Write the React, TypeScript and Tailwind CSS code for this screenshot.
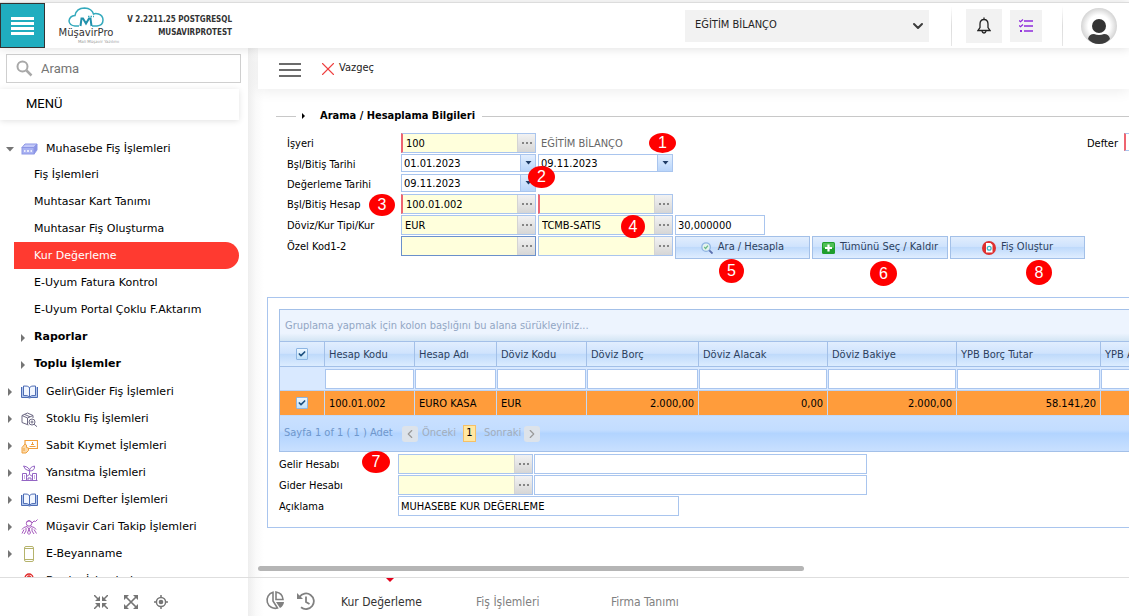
import type { ReactNode } from "react";
import { Check, ChevronDown, ChevronLeft, ChevronRight, X } from "lucide-react";

type FieldProps = {
  id: string;
  label?: string;
  value?: string;
  kind?: "lookup" | "date" | "text";
  required?: boolean;
  focused?: boolean;
  className?: string;
};

const Dots = () => (
  <svg width="10" height="2" viewBox="0 0 10 2" fill="#858585">
    <rect x="0" width="2" height="2" />
    <rect x="4" width="2" height="2" />
    <rect x="8" width="2" height="2" />
  </svg>
);

function Field({ id, label, value = "", kind = "lookup", required, focused, className = "w-[135px]" }: FieldProps) {
  const border = focused ? "border-[#6a90cb]" : "border-[#a9c5ee]";
  const bg = kind === "lookup" ? "bg-[#ffffdc]" : "bg-white";
  const height = kind === "date" ? "h-[18px]" : "h-[20px]";
  const edge = required ? "border-l-2 border-l-[#ee6470]" : "";
  return (
    <div className={`flex shrink-0 border ${border} ${bg} ${height} ${edge} ${className}`}>
      <input
        id={id}
        aria-label={label}
        defaultValue={value}
        className={`min-w-0 flex-1 bg-transparent pt-[2px] text-black outline-none ${kind === "lookup" ? "pl-[3px]" : "pl-[2px]"}`}
      />
      {kind === "lookup" && (
        <button
          aria-label="Seç"
          className="flex w-[18px] items-center justify-center border-l border-[#d4d4d4] bg-gradient-to-b from-[#f2f2f2] to-[#d6d6d6]"
        >
          <Dots />
        </button>
      )}
      {kind === "date" && (
        <button
          aria-label="Takvim"
          className="flex w-[15px] items-center justify-center border-l border-[#a9c5ee] bg-gradient-to-b from-[#e2eefe] to-[#b9d5fa]"
        >
          <svg width="7" height="4" viewBox="0 0 7 4">
            <path d="M.5 0h6L3.500 3.500z" fill="#1f3c66" />
          </svg>
        </button>
      )}
    </div>
  );
}

function FormRow({ label, id, short, children }: { label: string; id: string; short?: boolean; children: ReactNode }) {
  return (
    <div className={`flex items-start ${short ? "h-[20px]" : "h-[21px]"}`}>
      <label htmlFor={id} className="w-[114px] shrink-0 leading-[21px]">
        {label}
      </label>
      <div className="flex gap-[2px]">{children}</div>
    </div>
  );
}

function ActionButton({ icon, children, className }: { icon: ReactNode; children: ReactNode; className: string }) {
  return (
    <button
      className={`flex h-[23px] items-center justify-center gap-[5px] border border-[#a3c0e8] bg-[linear-gradient(#e1edfd,#cfe3fd_45%,#bfdafb_50%,#dfedff)] text-[#2c3f5e] ${className}`}
    >
      {icon}
      {children}
    </button>
  );
}

/* ---- sidebar icons ---- */

const CashIcon = () => (
  <svg width="17" height="14" viewBox="0 0 17 14" fill="#a9b2f2" stroke="#8d97e6">
    <path d="M1 5.500L4 2h12l-3 3.500z" fill="#c3c9f8" />
    <path d="M13 5.500L16 2v6l-3 4z" fill="#8a94e4" />
    <rect x="1" y="5.500" width="12" height="6.500" />
    <path d="M3 9h1.500M6 9h2M9.500 9H11" stroke="#fff" strokeWidth="1.500" />
  </svg>
);

const BookIcon = () => (
  <svg width="17" height="14" viewBox="0 0 17 14" fill="none" stroke="#4d6cb5">
    <path d="M.5 2v10.500h6.500q1.500 1 3 0h6.500V2" fill="#b4c9ee" />
    <path d="M2.500 1q4.500-.500 6 1.500 1.500-2 6-1.500v9.500q-4.500-.500-6 1.500-1.500-2-6-1.500z" fill="#f1f6ff" />
    <path d="M8.500 2.500v9.500" />
  </svg>
);

const StockIcon = () => (
  <svg width="17" height="15" viewBox="0 0 17 15" fill="none" stroke="#6f6b85">
    <path d="M7.500 13L1 10.500v-7L6.500 1 12 3.500V6M1 3.500L6.500 6 12 3.500M6.500 6v6.500M3.500 2.400L9 4.800" />
    <circle cx="11" cy="10" r="3" />
    <circle cx="11" cy="10" r="1" />
    <path d="M13 12.200l3 2.500" />
  </svg>
);

const AssetIcon = () => (
  <svg width="17" height="15" viewBox="0 0 17 15" fill="none" stroke="#f0a03c">
    <path d="M4 5V1.500h12.500v8H8" strokeWidth="1.200" />
    <path d="M8.500 7.500h6M10 5.500h3M11.500 3v2" />
    <path d="M1 14V8.500L4 5l1.500 1v2.500L7.500 9v2.500L5 14zM3 9v3" fill="#fbd9a8" />
  </svg>
);

const ReflectIcon = () => (
  <svg width="17" height="16" viewBox="0 0 17 16" fill="none" stroke="#9465c4">
    <path d="M2.500 1q1 4 6 5 0-4-6-5zM8.500 6q0-4 5-5 .500 5-5 5zM8.500 6v3.500" />
    <path d="M1.500 15.500v-7h4v7M11.500 15.500v-7h4v7M5.500 11.500l3-2 3 2M7 15.500v-2.500h3v2.500M.5 15.500h16M3 11h1M13 11h1M3 13h1M13 13h1" />
  </svg>
);

const AdvisorIcon = () => (
  <svg width="17" height="16" viewBox="0 0 17 16" fill="none" stroke="#a457bd">
    <circle cx="8" cy="4.500" r="2.700" />
    <path d="M5.500 3q2.500-3 5 0M11 4l2-2 1.500.5 2-2M1 10.500Q2 8 6 7.500l2 2.500 2-2.500q4 .5 5 3M8 10l-1.500 4L8 15.500 9.500 14z" />
    <path d="M3 10.500l-2 4M13 10.500l2.500 4M5 9v3l-2 3M11 9v3l2 3" />
  </svg>
);

const DocIcon = () => (
  <svg width="17" height="16" viewBox="0 0 17 16" fill="none" stroke="#b5b36c">
    <rect x="3.500" y=".5" width="9" height="15" rx="1.500" />
    <path d="M3.500 2.500h9M3.500 13.500h9" />
  </svg>
);

const PayrollIcon = () => (
  <svg width="17" height="16" viewBox="0 0 17 16" fill="none" stroke="#e02b2b" strokeWidth="1.300">
    <circle cx="8" cy="5" r="4" />
    <path d="M6.500 4q1.500-2 3 0L8 6M2 15q1-5 6-5t6 5" />
  </svg>
);

const Arrow = ({ open }: { open?: boolean }) => (
  <svg width="8" height="8" viewBox="0 0 8 8" fill="#757575" className="shrink-0">
    {open ? <path d="M0 2h8L4 6.500z" /> : <path d="M2 0v8l4-4z" />}
  </svg>
);

const subItems = [
  "Fiş İşlemleri",
  "Muhtasar Kart Tanımı",
  "Muhtasar Fiş Oluşturma",
  "Kur Değerleme",
  "E-Uyum Fatura Kontrol",
  "E-Uyum Portal Çoklu F.Aktarım",
];

const groups = [
  { label: "Gelir\\Gider Fiş İşlemleri", icon: <BookIcon /> },
  { label: "Stoklu Fiş İşlemleri", icon: <StockIcon /> },
  { label: "Sabit Kıymet İşlemleri", icon: <AssetIcon /> },
  { label: "Yansıtma İşlemleri", icon: <ReflectIcon /> },
  { label: "Resmi Defter İşlemleri", icon: <BookIcon /> },
  { label: "Müşavir Cari Takip İşlemleri", icon: <AdvisorIcon /> },
  { label: "E-Beyanname", icon: <DocIcon /> },
  { label: "Bordro İşlemleri", icon: <PayrollIcon /> },
];

function GroupRow({ label, icon, open }: { label: string; icon: ReactNode; open?: boolean }) {
  return (
    <a href="#" className="flex h-[27px] items-center pt-[3px] pl-[6px]">
      <Arrow open={open} />
      <span className="ml-[7px] w-[25px]">{icon}</span>
      {label}
    </a>
  );
}

function Sidebar() {
  return (
    <aside className="flex w-[248px] shrink-0 flex-col bg-white">
      <div className="mt-[6px] mr-[7px] ml-[6px] flex h-[29px] shrink-0 items-center border border-[#cfcfcf]">
        <svg width="17" height="17" viewBox="0 0 17 17" fill="none" stroke="#a8a8a8" className="ml-[9px] shrink-0">
          <circle cx="6.500" cy="6.500" r="5" strokeWidth="2" />
          <path d="M10.500 10.500l5 5" strokeWidth="2.500" />
        </svg>
        <input
          aria-label="Arama"
          placeholder="Arama"
          className="ml-[8px] min-w-0 flex-1 font-['Roboto',sans-serif] text-[13px] outline-none placeholder:text-[#757575]"
        />
      </div>
      <h2 className="mt-[6px] mr-[9px] flex h-[31px] shrink-0 items-center pb-[2px] pl-[26px] font-['Roboto',sans-serif] text-[13px] text-black shadow-[0_1px_6px_rgba(0,0,0,0.12)]">
        MENÜ
      </h2>
      <nav className="mt-[14px] min-h-0 flex-1 overflow-hidden font-['DejaVu_Sans',sans-serif] text-[11px] text-black">
        <GroupRow label="Muhasebe Fiş İşlemleri" icon={<CashIcon />} open />
        {subItems.map((item) => (
          <a
            key={item}
            href="#"
            className={`mr-[9px] ml-[14px] flex h-[27px] items-center pt-[2px] pl-[20px] ${
              item === "Kur Değerleme" ? "rounded-r-full bg-[#ff3a30] text-white" : ""
            }`}
          >
            {item}
          </a>
        ))}
        {["Raporlar", "Toplu İşlemler"].map((item) => (
          <a key={item} href="#" className="flex h-[27px] items-center gap-[7px] pt-[2px] pl-[19px] font-bold">
            <Arrow />
            {item}
          </a>
        ))}
        {groups.map((g) => (
          <GroupRow key={g.label} label={g.label} icon={g.icon} />
        ))}
      </nav>
      <div className="flex h-[39px] shrink-0 items-center justify-center gap-4 border-t border-[#dedede] pt-[9px] pl-[13px] text-[#757575]">
        <button aria-label="Daralt">
          <svg width="14" height="14" viewBox="0 0 14 14" fill="currentColor" stroke="currentColor" strokeWidth="1.500">
            <path d="M0 0l4 4M14 0l-4 4M0 14l4-4M14 14l-4-4" />
            <path d="M6 1v5H1zM8 1v5h5zM6 13V8H1zM8 13V8h5z" stroke="none" />
          </svg>
        </button>
        <button aria-label="Genişlet">
          <svg width="14" height="14" viewBox="0 0 14 14" fill="currentColor" stroke="currentColor" strokeWidth="1.700">
            <path d="M2 2l10 10M12 2L2 12" />
            <path d="M0 0h5L0 5zM14 0H9l5 5zM0 14h5L0 9zM14 14H9l5-5z" stroke="none" />
          </svg>
        </button>
        <button aria-label="Konum">
          <svg width="14" height="14" viewBox="0 0 14 14" fill="none" stroke="currentColor" strokeWidth="1.500">
            <circle cx="7" cy="7" r="4.600" />
            <circle cx="7" cy="7" r="2.300" fill="currentColor" stroke="none" />
            <path d="M7 0v3M7 11v3M0 7h3M11 7h3" />
          </svg>
        </button>
      </div>
    </aside>
  );
}

function Header() {
  return (
    <header className="relative z-10 mt-[2px] flex h-[46px] shrink-0 items-center border-t border-[#dcdcdc] bg-white shadow-[0_0_10px_rgba(0,0,0,0.14)]">
      <button
        aria-label="Menü"
        className="flex h-[45px] w-[45px] flex-col items-center justify-center gap-[2px] border border-[#333] bg-[#20adbf]"
      >
        <span className="h-[3px] w-[23px] bg-white" />
        <span className="h-[3px] w-[23px] bg-white" />
        <span className="h-[3px] w-[23px] bg-white" />
        <span className="h-[3px] w-[23px] bg-white" />
      </button>
      <div className="ml-[8px] flex w-[66px] flex-col items-center">
        <svg width="36" height="20" viewBox="0 0 36 20" fill="none" stroke="#35aabd" strokeWidth="1.500">
          <path d="M11 19H7Q1.500 18.500 1 14 1.500 9 7 8.500 8.500 1 16.500 1 24 1.500 25.500 7q2-1 5 0 4.500 1.500 4.500 6 0 5.500-6 6H24" />
          <path d="M12.500 19l1-7.500h1.500l3 5 3-5h1.500l1 7.500" strokeWidth="2" stroke="#2191ac" />
          <path d="M20 9.500h6" strokeDasharray="1.500 1" />
        </svg>
        <span className="font-['DejaVu_Sans',sans-serif] text-[10px] leading-[12px] text-[#333]">MüşavirPro</span>
        <span className="self-end font-['DejaVu_Sans',sans-serif] text-[4px] leading-[5px] text-[#999]">Mali Müşavir Yazılımı</span>
      </div>
      <div className="ml-[5px] w-[108px] text-right text-[8px] leading-[13px] font-bold whitespace-nowrap text-[#333]">
        V 2.2211.25 POSTGRESQL
        <br />
        MUSAVIRPROTEST
      </div>
      <div className="ml-auto flex items-center pr-[12px]">
        <div className="relative">
          <select
            aria-label="İşyeri seçimi"
            className="h-[32px] w-[244px] appearance-none bg-[#f2f2f2] pl-[10px] text-[11px] text-[#222] outline-none"
          >
            <option>EĞİTİM BİLANÇO</option>
          </select>
          <ChevronDown className="pointer-events-none absolute top-[8px] right-[3px] h-[16px] w-[16px] text-[#3c3c3c]" strokeWidth={3} />
        </div>
        <span className="ml-[22px] h-[40px] w-px bg-gradient-to-b from-white via-[#ddd] to-[#e6e6e6]" />
        <button aria-label="Bildirimler" className="ml-[14px] flex h-[34px] w-[36px] items-center justify-center bg-[#f2f2f2]">
          <svg width="14" height="17" viewBox="0 0 14 17" fill="none" stroke="#222" strokeWidth="1.300">
            <path d="M7 2.500Q3 2.500 3 7v3.500L1 13.500h12L11 10.500V7Q11 2.500 7 2.500zM7 .5v2" />
            <path d="M5 14q.300 2 2 2t2-2" />
          </svg>
        </button>
        <button aria-label="Görevler" className="ml-[8px] flex h-[32px] w-[32px] items-center justify-center bg-[#f2f2f2]">
          <svg width="14" height="13" viewBox="0 0 14 13" fill="none" stroke="#8f2bdb" strokeWidth="1.600">
            <path d="M5 2h9M5 7h9M5 12h9" />
            <path d="M0 1.500l1.500 1.300L4 .5M0 6.500l1.500 1.300L4 5.500" strokeWidth="1.200" />
            <path d="M1 12h2" strokeWidth="2" />
          </svg>
        </button>
        <span className="ml-[20px] h-[40px] w-px bg-gradient-to-b from-white via-[#ddd] to-[#e6e6e6]" />
        <button aria-label="Profil" className="ml-[18px]">
          <svg width="36" height="36" viewBox="0 0 36 36">
            <defs>
              <radialGradient id="avatar">
                <stop offset="0.600" stopColor="#fff" />
                <stop offset="1" stopColor="#d4d4d4" />
              </radialGradient>
            </defs>
            <circle cx="18" cy="18" r="18" fill="url(#avatar)" />
            <circle cx="18" cy="18" r="7" fill="#333" />
            <path d="M7 31q1-5 6-5 5 2 10 0 5 0 6 5-4 5-11 5T7 31z" fill="#3c3c3c" />
          </svg>
        </button>
      </div>
    </header>
  );
}

function CheckBox({ label }: { label: string }) {
  return (
    <span className="relative mx-auto flex h-[12px] w-[12px] items-center justify-center">
      <input
        type="checkbox"
        defaultChecked
        aria-label={label}
        className="peer h-[12px] w-[12px] appearance-none rounded-[1px] border border-[#8db5e2] bg-gradient-to-b from-[#eef7ff] to-[#bfe0fa]"
      />
      <Check className="pointer-events-none invisible absolute h-[8px] w-[8px] text-[#1d5080] peer-checked:visible" strokeWidth={5} />
    </span>
  );
}

const columns = [
  { title: "Hesap Kodu", value: "100.01.002", width: "w-[90px]" },
  { title: "Hesap Adı", value: "EURO KASA", width: "w-[82px]" },
  { title: "Döviz Kodu", value: "EUR", width: "w-[90px]" },
  { title: "Döviz Borç", value: "2.000,00", width: "w-[112px]", numeric: true },
  { title: "Döviz Alacak", value: "0,00", width: "w-[129px]", numeric: true },
  { title: "Döviz Bakiye", value: "2.000,00", width: "w-[129px]", numeric: true },
  { title: "YPB Borç Tutar", value: "58.141,20", width: "w-[144px]", numeric: true },
  { title: "YPB Alacak", value: "", width: "w-[144px]", numeric: true },
];

function Grid() {
  return (
    <div className="w-[966px] border border-[#a3c0e8] text-[#2c3f5e]">
      <div className="flex h-[32px] items-center border-b border-[#a3c0e8] bg-[linear-gradient(#edf4fe_75%,#d3e5f4)] pt-[2px] pl-[5px] text-[#92a6c4]">
        Gruplama yapmak için kolon başlığını bu alana sürükleyiniz...
      </div>
      <table className="w-full table-fixed border-separate border-spacing-0">
        <thead>
          <tr className="h-[25px] bg-[linear-gradient(#e1eefe,#cfe3fd_45%,#bfdafb_50%,#dfeeff)]">
            <th className="w-[45px] border-r border-b border-[#a3c0e8] p-0">
              <CheckBox label="Tümünü seç" />
            </th>
            {columns.map((c) => (
              <th key={c.title} className={`border-r border-b border-[#a3c0e8] p-0 pt-[2px] pl-1 text-left font-normal whitespace-nowrap ${c.width}`}>
                {c.title}
              </th>
            ))}
          </tr>
        </thead>
        <tbody>
          <tr className="h-[24px] bg-[#d9e9ff]">
            <td className="border-b border-[#b9d2f5] p-0" />
            {columns.map((c) => (
              <td key={c.title} className="border-b border-[#b9d2f5] p-0 pr-px">
                <input aria-label={`${c.title} filtre`} className="block h-[20px] w-full border border-[#a9c5ee] bg-white px-1 outline-none" />
              </td>
            ))}
          </tr>
          <tr className="h-[25px] bg-[#ff9c3b] text-black">
            <td className="border-r border-b border-[#c3d9f7] p-0">
              <CheckBox label="Satırı seç" />
            </td>
            {columns.map((c) => (
              <td key={c.title} className={`border-r border-b border-[#c3d9f7] p-0 px-1 pt-[2px] ${c.numeric ? "text-right" : ""}`}>
                {c.value}
              </td>
            ))}
          </tr>
        </tbody>
      </table>
      <div className="flex h-[35px] items-center bg-[linear-gradient(#c9e0ff,#c3ddff_40%,#b2d4ff_50%,#c9e0ff)] pl-1 text-[#6f97cc]">
        <span className="w-[118px]">Sayfa 1 of 1 ( 1 ) Adet</span>
        <button aria-label="Önceki sayfa" className="flex h-[16px] w-[16px] items-center justify-center rounded-[3px] bg-[#dde3ea] text-[#9a9a9a]">
          <ChevronLeft className="h-[14px] w-[14px]" />
        </button>
        <span className="ml-[4px] w-[41px] text-[#a2adbb]">Önceki</span>
        <span className="flex h-[17px] w-[13px] items-center justify-center border border-[#f5c067] bg-[#ffe7a2] text-black">1</span>
        <span className="ml-[8px] w-[40px] text-[#a2adbb]">Sonraki</span>
        <button aria-label="Sonraki sayfa" className="flex h-[16px] w-[16px] items-center justify-center rounded-[3px] bg-[#dde3ea] text-[#9a9a9a]">
          <ChevronRight className="h-[14px] w-[14px]" />
        </button>
      </div>
    </div>
  );
}

/* numbered step markers, placed over the form */
const markers = [
  { n: 1, place: "left-[401px] top-[85px] h-[20px] w-[27px]" },
  { n: 2, place: "left-[280px] top-[118px] h-[22px] w-[27px]" },
  { n: 3, place: "left-[121px] top-[146px] h-[22px] w-[26px]" },
  { n: 4, place: "left-[373px] top-[167px] h-[23px] w-[24px]" },
  { n: 5, place: "left-[471px] top-[211px] h-[24px] w-[25px]" },
  { n: 6, place: "left-[622px] top-[213px] h-[25px] w-[27px]" },
  { n: 7, place: "left-[114px] top-[403px] h-[22px] w-[28px]" },
  { n: 8, place: "left-[778px] top-[212px] h-[25px] w-[26px]" },
];

const tabs = ["Kur Değerleme", "Fiş İşlemleri", "Firma Tanımı"];

export default function App() {
  return (
    <div className="flex h-screen flex-col overflow-hidden bg-white font-['DejaVu_Sans_Condensed','Noto_Sans',sans-serif] text-[11px] text-black">
      <Header />
      <div className="flex min-h-0 flex-1">
        <Sidebar />
        <main className="relative flex min-w-0 flex-1 flex-col overflow-hidden bg-[linear-gradient(to_right,#eeeeee,#fafafa_8px,#ffffff_16px)]">
          <div className="ml-[10px] flex h-[41px] shrink-0 items-center bg-white pl-[21px] shadow-[0_2px_14px_rgba(0,0,0,0.08)]">
            <button aria-label="Araç çubuğu" className="flex w-[22px] flex-col gap-[4px] pt-[2px]">
              <span className="h-[2px] bg-[#6b6b6b]" />
              <span className="h-[2px] bg-[#6b6b6b]" />
              <span className="h-[2px] bg-[#6b6b6b]" />
            </button>
            <button className="ml-[16px] flex items-center text-[#222]">
              <X className="h-[22px] w-[22px]" color="#ee4040" strokeWidth={1.2} />
              Vazgeç
            </button>
          </div>

          <div className="min-h-0 flex-1 overflow-hidden pl-[19px]">
            <div className="mt-[19px] ml-[9px] flex h-[16px] items-center">
              <span className="h-px w-[20px] bg-[#c8c8c8]" />
              <svg width="5" height="8" viewBox="0 0 5 8" className="mx-[5px]">
                <path d="M1 1v6l3-3z" />
              </svg>
              <h1 className="ml-[9px] text-[11px] font-bold">Arama / Hesaplama Bilgileri</h1>
              <span className="ml-[7px] h-px flex-1 bg-[#c8c8c8]" />
            </div>

            <div className="mt-[9px] ml-[20px] flex justify-between">
              <div>
                <FormRow label="İşyeri" id="isyeri">
                  <Field id="isyeri" value="100" required />
                  <span className="pl-[3px] leading-[21px] text-[#666]">EĞİTİM BİLANÇO</span>
                </FormRow>
                <FormRow label="Bşl/Bitiş Tarihi" id="bsl-tarih" short>
                  <Field id="bsl-tarih" value="01.01.2023" kind="date" />
                  <Field id="bitis-tarih" label="Bitiş Tarihi" value="09.11.2023" kind="date" />
                </FormRow>
                <FormRow label="Değerleme Tarihi" id="deger-tarih" short>
                  <Field id="deger-tarih" value="09.11.2023" kind="date" />
                </FormRow>
                <FormRow label="Bşl/Bitiş Hesap" id="bsl-hesap">
                  <Field id="bsl-hesap" value="100.01.002" required />
                  <Field id="bitis-hesap" label="Bitiş Hesap" required />
                </FormRow>
                <FormRow label="Döviz/Kur Tipi/Kur" id="doviz">
                  <Field id="doviz" value="EUR" />
                  <Field id="kur-tipi" label="Kur Tipi" value="TCMB-SATIS" />
                  <Field id="kur" label="Kur" value="30,000000" kind="text" className="w-[90px]" />
                </FormRow>
                <FormRow label="Özel Kod1-2" id="ozel-kod-1">
                  <Field id="ozel-kod-1" focused />
                  <Field id="ozel-kod-2" label="Özel Kod 2" />
                  <ActionButton
                    className="w-[135px]"
                    icon={
                      <svg width="12" height="12" viewBox="0 0 13 13" fill="#e4f3ee" stroke="#8fb4e2" strokeWidth="1.400">
                        <circle cx="5.500" cy="5.500" r="4.600" />
                        <path d="M9 9l3.500 3.500" stroke="#5a6fae" strokeWidth="2" />
                        <path d="M3.500 5.500L5 7l2.500-3" stroke="#6cb98a" fill="none" />
                      </svg>
                    }
                  >
                    Ara / Hesapla
                  </ActionButton>
                  <ActionButton
                    className="w-[136px]"
                    icon={
                      <svg width="13" height="12" viewBox="0 0 13 12">
                        <rect width="13" height="12" rx="1.500" fill="#1f9e2c" />
                        <rect x="1" y="1" width="11" height="5" rx="1" fill="#4fc055" />
                        <path d="M6.500 2.500v7M3 6h7" stroke="#fff" strokeWidth="2.200" />
                      </svg>
                    }
                  >
                    Tümünü Seç / Kaldır
                  </ActionButton>
                  <ActionButton
                    className="w-[135px]"
                    icon={
                      <svg width="14" height="14" viewBox="0 0 14 14">
                        <circle cx="7" cy="7" r="7" fill="#dd3030" />
                        <path d="M4 2h4.500L10.500 4v7.500H4z" fill="#fff" />
                        <circle cx="7.200" cy="7.200" r="1.900" fill="none" stroke="#38b6c9" strokeWidth="1.300" />
                      </svg>
                    }
                  >
                    Fiş Oluştur
                  </ActionButton>
                </FormRow>
              </div>
              <div className="flex shrink-0 items-start">
                <label htmlFor="defter" className="leading-[21px]">Defter</label>
                <div className="ml-[6px] h-[18px] w-[5px] overflow-hidden">
                  <input id="defter" className="h-[18px] w-[100px] border border-l-2 border-[#a9c5ee] border-l-[#ee6470]" />
                </div>
              </div>
            </div>

            <section className="mt-[40px] w-[1000px] border border-[#a9c5ee] px-[11px] py-[11px]">
              <Grid />
              <div className="mt-[2px]">
                <div className="flex h-[21px] items-start">
                  <label htmlFor="gelir" className="w-[119px] leading-[21px]">Gelir Hesabı</label>
                  <Field id="gelir" />
                  <Field id="gelir-ad" label="Gelir hesap adı" kind="text" className="ml-px w-[333px]" />
                </div>
                <div className="flex h-[21px] items-start">
                  <label htmlFor="gider" className="w-[119px] leading-[21px]">Gider Hesabı</label>
                  <Field id="gider" />
                  <Field id="gider-ad" label="Gider hesap adı" kind="text" className="ml-px w-[333px]" />
                </div>
                <div className="flex h-[20px] items-start">
                  <label htmlFor="aciklama" className="w-[119px] leading-[21px]">Açıklama</label>
                  <Field id="aciklama" value="MUHASEBE KUR DEĞERLEME" kind="text" className="w-[281px]" />
                </div>
              </div>
            </section>
          </div>

          <div className="mb-[6px] ml-[10px] h-[5px] w-[62%] shrink-0 rounded-full bg-[#b5b5b5]" />

          <footer className="flex h-[39px] shrink-0 border-t border-[#dedede] pl-[17px]">
            <div className="flex items-center gap-[12px] pt-[7px] text-[#808080]">
              <button aria-label="Raporlar">
                <svg width="20" height="19" viewBox="0 0 20 19" fill="none" stroke="currentColor" strokeWidth="1.600">
                  <path d="M8 1.200A8 8 0 1 0 12.500 17L8 10z" />
                  <path d="M11 1v7.500h7Q17.500 2 11 1z" />
                  <path d="M11 11h8q-.5 4-4 6z" fill="currentColor" stroke="none" />
                </svg>
              </button>
              <button aria-label="Geçmiş">
                <svg width="18" height="18" viewBox="0 0 18 18" fill="none" stroke="currentColor" strokeWidth="1.800">
                  <path d="M2.500 5A7.800 7.800 0 1 1 4 15.200M9 4.500V10l3.500 2" />
                  <path d="M0 1v6h6z" fill="currentColor" stroke="none" />
                </svg>
              </button>
            </div>
            <div className="ml-[8px] flex">
              {tabs.map((tab, i) => (
                <button key={tab} className={`relative w-[135px] pt-[9px] pl-[18px] text-left text-[12px] ${i === 0 ? "text-[#333]" : "text-[#808080]"}`}>
                  {tab}
                  {i === 0 && (
                    <svg width="8" height="4" viewBox="0 0 8 4" className="absolute top-0 left-[63px]">
                      <path d="M0 0h8L4 4z" fill="#e3001b" />
                    </svg>
                  )}
                </button>
              ))}
            </div>
          </footer>

          {markers.map((m) => (
            <span
              key={m.n}
              className={`absolute flex items-center justify-center rounded-[50%] bg-[#ff0000] font-['Liberation_Sans',sans-serif] text-[16px] text-white ${m.place}`}
            >
              {m.n}
            </span>
          ))}
        </main>
      </div>
    </div>
  );
}
